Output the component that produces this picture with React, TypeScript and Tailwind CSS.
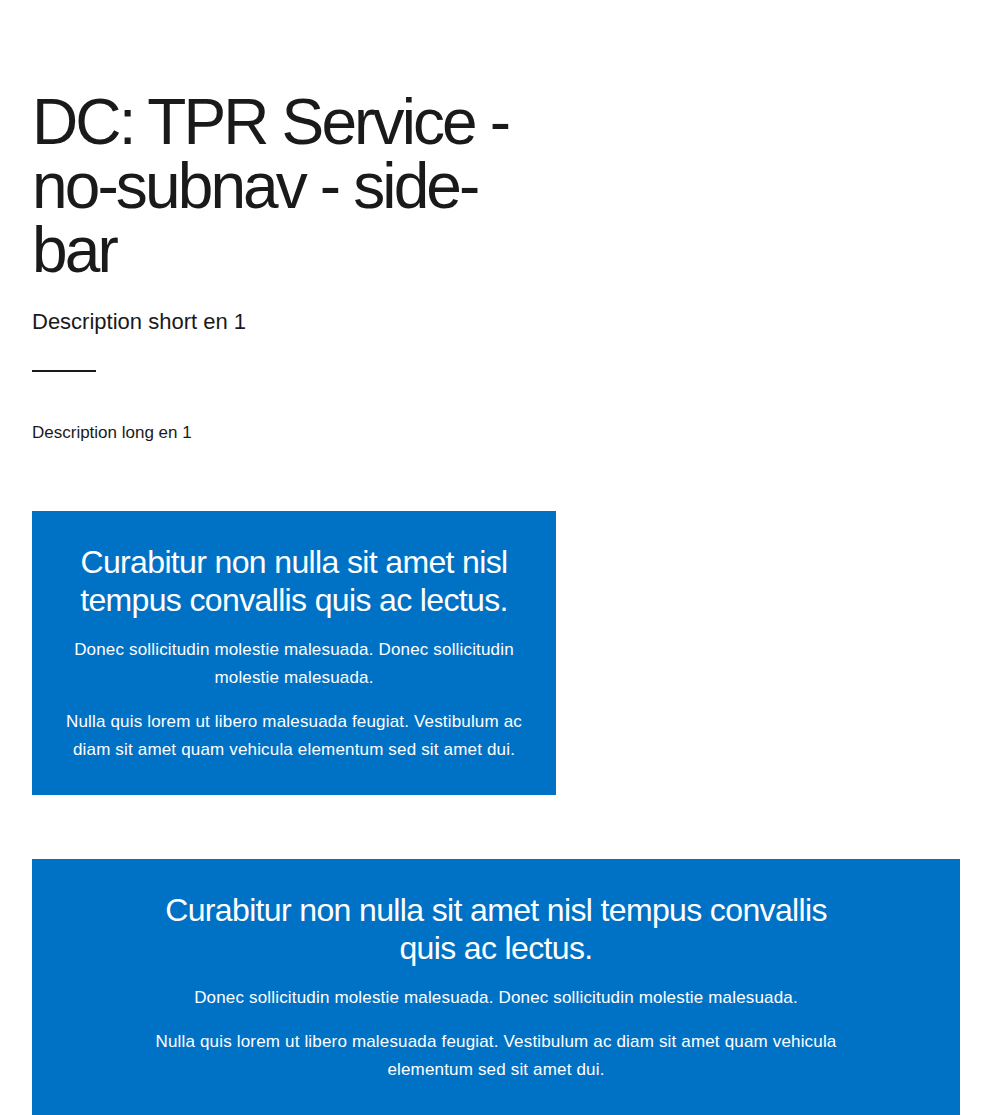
import React from "react";

const font = { fontFamily: '"Liberation Sans", Arial, sans-serif' };

function Promo({ wide }: { wide?: boolean }) {
  return (
    <div className={`bg-[#0072c6] text-white text-center px-8 pt-[32px] pb-[31px] ${wide ? "w-full" : "w-[524px]"}`}>
      <div className={wide ? "mx-auto max-w-[700px]" : ""}>
        <h2 className="text-[32px] leading-[38px] tracking-[-0.02em]">
          Curabitur non nulla sit amet nisl tempus convallis quis ac lectus.
        </h2>
        <p className="mt-[17px] text-[17px] leading-[28px] tracking-[0.01em]">
          Donec sollicitudin molestie malesuada. Donec sollicitudin molestie malesuada.
        </p>
        <p className="mt-4 text-[17px] leading-[28px] tracking-[0.01em]">
          Nulla quis lorem ut libero malesuada feugiat. Vestibulum ac diam sit amet quam vehicula elementum sed sit amet dui.
        </p>
      </div>
    </div>
  );
}

export default function App() {
  return (
    <div className="min-h-[1115px] bg-white px-8 pt-[90px] text-[#1a1a1a]" style={font}>
      <div className="w-[524px]">
        <h1 className="w-[505px] text-[64px] leading-[64px] tracking-[-0.045em]">
          DC: TPR Service - no-subnav - side-bar
        </h1>
        <p className="mt-[25px] text-[22px] leading-[30px]">Description short en 1</p>
        <div className="mt-[33px] h-[2px] w-16 bg-[#1a1a1a]" />
        <p className="mt-[47px] text-[17px] leading-[28px]">Description long en 1</p>
      </div>
      <div className="mt-[64px]">
        <Promo />
      </div>
      <div className="mt-16">
        <Promo wide />
      </div>
    </div>
  );
}
